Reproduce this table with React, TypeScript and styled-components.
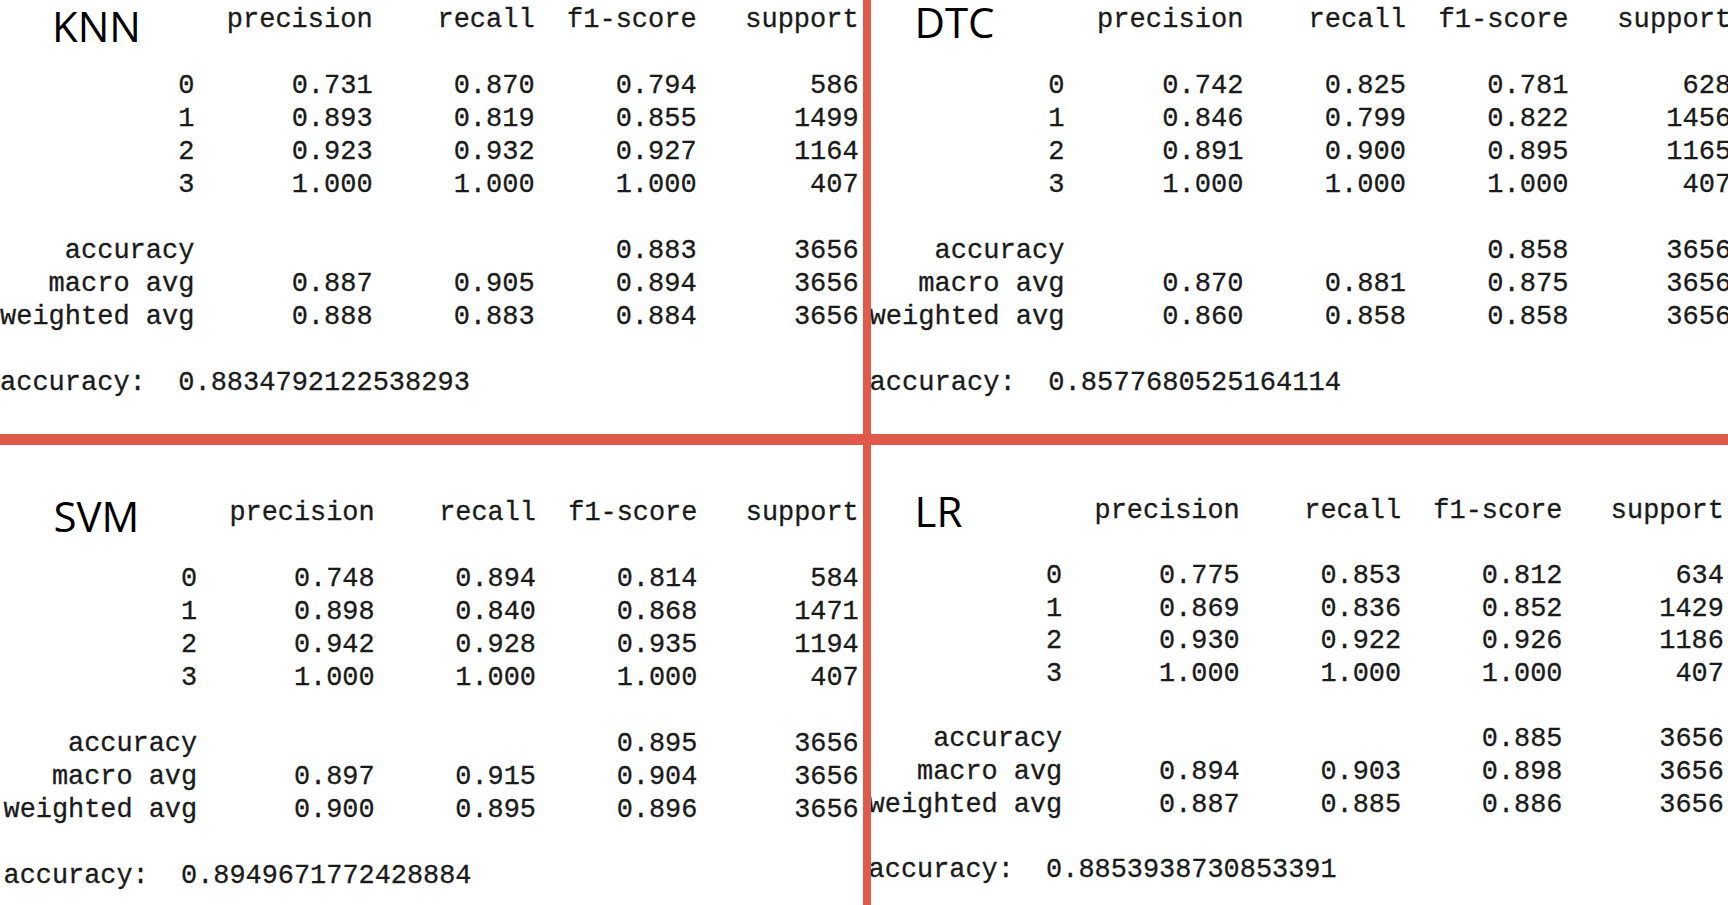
import styled, { createGlobalStyle } from "styled-components";

type Cells = [string, string, string, string, string];

interface Layout {
  top: number;
  left: number;
  size: number;
  line: number;
  titleLeft: number;
  titleShift: number;
}

interface ModelReport {
  name: string;
  classes: Cells[];
  summary: Cells[];
  accuracy: string;
  layout: Layout;
}

const reports: ModelReport[] = [
  {
    name: "KNN",
    classes: [
      ["0", "0.731", "0.870", "0.794", "586"],
      ["1", "0.893", "0.819", "0.855", "1499"],
      ["2", "0.923", "0.932", "0.927", "1164"],
      ["3", "1.000", "1.000", "1.000", "407"],
    ],
    summary: [
      ["accuracy", "", "", "0.883", "3656"],
      ["macro avg", "0.887", "0.905", "0.894", "3656"],
      ["weighted avg", "0.888", "0.883", "0.884", "3656"],
    ],
    accuracy: "0.8834792122538293",
    layout: { top: 4, left: 0, size: 27, line: 33, titleLeft: 52, titleShift: -3 },
  },
  {
    name: "DTC",
    classes: [
      ["0", "0.742", "0.825", "0.781", "628"],
      ["1", "0.846", "0.799", "0.822", "1456"],
      ["2", "0.891", "0.900", "0.895", "1165"],
      ["3", "1.000", "1.000", "1.000", "407"],
    ],
    summary: [
      ["accuracy", "", "", "0.858", "3656"],
      ["macro avg", "0.870", "0.881", "0.875", "3656"],
      ["weighted avg", "0.860", "0.858", "0.858", "3656"],
    ],
    accuracy: "0.8577680525164114",
    layout: { top: 3, left: -1.5, size: 27.1, line: 33, titleLeft: 45, titleShift: -6 },
  },
  {
    name: "SVM",
    classes: [
      ["0", "0.748", "0.894", "0.814", "584"],
      ["1", "0.898", "0.840", "0.868", "1471"],
      ["2", "0.942", "0.928", "0.935", "1194"],
      ["3", "1.000", "1.000", "1.000", "407"],
    ],
    summary: [
      ["accuracy", "", "", "0.895", "3656"],
      ["macro avg", "0.897", "0.915", "0.904", "3656"],
      ["weighted avg", "0.900", "0.895", "0.896", "3656"],
    ],
    accuracy: "0.8949671772428884",
    layout: { top: 52, left: 3.5, size: 26.9, line: 33, titleLeft: 50, titleShift: -6 },
  },
  {
    name: "LR",
    classes: [
      ["0", "0.775", "0.853", "0.812", "634"],
      ["1", "0.869", "0.836", "0.852", "1429"],
      ["2", "0.930", "0.922", "0.926", "1186"],
      ["3", "1.000", "1.000", "1.000", "407"],
    ],
    summary: [
      ["accuracy", "", "", "0.885", "3656"],
      ["macro avg", "0.894", "0.903", "0.898", "3656"],
      ["weighted avg", "0.887", "0.885", "0.886", "3656"],
    ],
    accuracy: "0.8853938730853391",
    layout: { top: 49.5, left: -2.4, size: 26.9, line: 32.7, titleLeft: 46, titleShift: -9 },
  },
];

const headers = ["precision", "recall", "f1-score", "support"];

export default function App() {
  return (
    <>
      <GlobalStyle />
      <Board>
        {reports.map((r) => (
          <Panel key={r.name}>
            <Report report={r} />
          </Panel>
        ))}
      </Board>
    </>
  );
}

function Report({ report }: { report: ModelReport }) {
  const { layout } = report;
  return (
    <Sheet $top={layout.top} $left={layout.left} $size={layout.size} $line={layout.line}>
      <HeaderRow>
        <LabelCell>
          <Title $left={layout.titleLeft} $shift={layout.titleShift}>
            {report.name}
          </Title>
        </LabelCell>
        {headers.map((h) => (
          <Cell key={h}>{h}</Cell>
        ))}
      </HeaderRow>
      {report.classes.map((c) => (
        <DataRow key={c[0]} cells={c} />
      ))}
      <Blank />
      {report.summary.map((c) => (
        <DataRow key={c[0]} cells={c} />
      ))}
      <Blank />
      <AccuracyLine>{`accuracy:  ${report.accuracy}`}</AccuracyLine>
    </Sheet>
  );
}

function DataRow({ cells }: { cells: Cells }) {
  const [label, ...values] = cells;
  return (
    <Row>
      <LabelCell>{label}</LabelCell>
      {values.map((v, i) => (
        <Cell key={i}>{v}</Cell>
      ))}
    </Row>
  );
}

const GlobalStyle = createGlobalStyle`
  html, body {
    margin: 0;
    padding: 0;
    background: #ffffff;
  }
  #root {
    width: 1728px;
    height: 905px;
  }
`;

const Board = styled.div`
  width: 1728px;
  height: 905px;
  display: grid;
  grid-template-columns: 863px 1fr;
  grid-template-rows: 434px 1fr;
  column-gap: 8px;
  row-gap: 11px;
  background: #e05a4b;
  overflow: hidden;
`;

const Panel = styled.section`
  background: #ffffff;
  overflow: hidden;
  display: flex;
  flex-direction: column;
`;

const Sheet = styled.div<{ $top: number; $left: number; $size: number; $line: number }>`
  margin-top: ${({ $top }) => $top}px;
  margin-left: ${({ $left }) => $left}px;
  font-family: "Liberation Mono", "DejaVu Sans Mono", monospace;
  font-size: ${({ $size }) => $size}px;
  line-height: ${({ $line }) => $line}px;
  color: #1a1a1a;
  -webkit-text-stroke: 0.3px #1a1a1a;
  white-space: pre;
  --row: ${({ $line }) => $line}px;
`;

const Row = styled.div`
  display: grid;
  grid-template-columns: 12ch 11ch 10ch 10ch 10ch;
  align-items: start;
  height: var(--row);
`;

/* header line plus the blank line under it */
const HeaderRow = styled(Row)`
  height: calc(var(--row) * 2);
`;

const Cell = styled.span`
  text-align: right;
`;

const LabelCell = styled.span`
  text-align: right;
`;

const Blank = styled.div`
  height: var(--row);
`;

const AccuracyLine = styled.div`
  height: var(--row);
`;

const Title = styled.div<{ $left: number; $shift: number }>`
  margin-top: ${({ $shift }) => $shift}px;
  padding-left: ${({ $left }) => $left}px;
  text-align: left;
  font-family: "Open Sans", "Noto Sans", sans-serif;
  font-size: 42px;
  line-height: 1.2;
  color: #000000;
  -webkit-text-stroke: 0;
`;
